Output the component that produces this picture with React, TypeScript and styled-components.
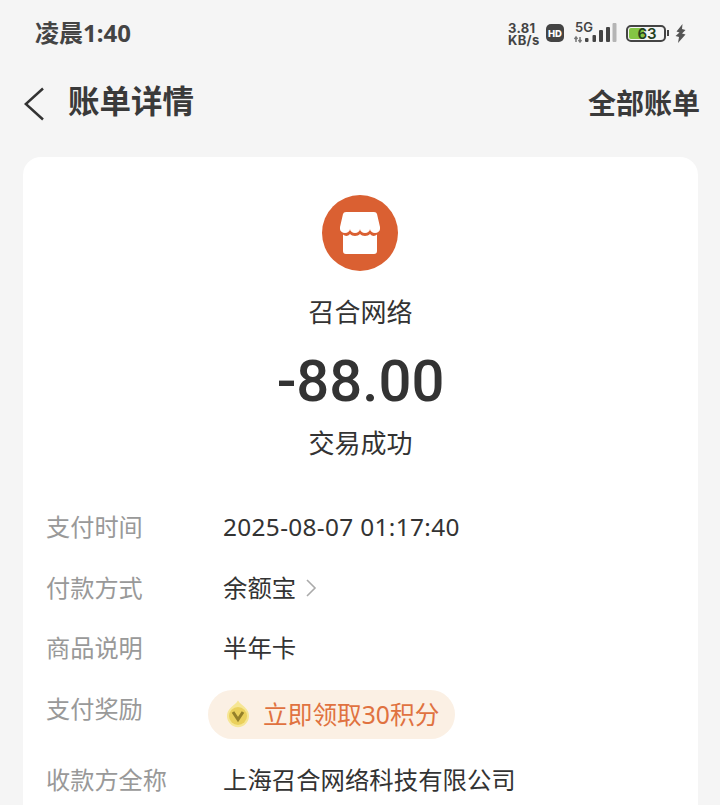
import styled, { createGlobalStyle } from "styled-components";

const CJK = `"Noto Sans", "Noto Sans CJK SC", sans-serif`;

const GlobalStyle = createGlobalStyle`
  html, body {
    margin: 0;
    padding: 0;
    height: 100%;
    overflow: hidden;
    background: #f5f5f5;
  }
`;

const rows = [
  { label: "支付时间", value: "2025-08-07 01:17:40", numeric: true },
  { label: "付款方式", value: "余额宝", arrow: true },
  { label: "商品说明", value: "半年卡" },
];

function App() {
  return (
    <SCPage>
      <GlobalStyle />
      <SCStatusBar>
        <SCTime>凌晨1:40</SCTime>
        <SCStatusIcons>
          <SCSpeed>{"3.81\nKB/s"}</SCSpeed>
          <SCHd>HD</SCHd>
          <SCNetwork>
            <SCFiveG>5G</SCFiveG>
            <svg width="43" height="20" viewBox="0 0 43 20">
              <path d="M2 19v-5M0.500 16l1.500-2 1.500 2M6 14v5M4.500 17l1.500 2 1.500-2" stroke="#777" strokeWidth="1.500" fill="none" />
              <rect x="11" y="15" width="3.500" height="4" rx="1" fill="#444" />
              <rect x="18.500" y="12" width="3.500" height="7" rx="1" fill="#444" />
              <rect x="25" y="7" width="4" height="12" rx="1" fill="#444" />
              <rect x="32" y="4" width="4" height="15" rx="1" fill="#444" />
              <rect x="38.500" y="0" width="4" height="19" rx="1" fill="#b5b5b5" />
            </svg>
          </SCNetwork>
          <SCBattery>
            <SCBatteryFill />
            <SCBatteryLevel>63</SCBatteryLevel>
          </SCBattery>
          <SCBatteryCap />
          <svg width="11" height="19" viewBox="0 0 11 19">
            <path d="M7.500 0 1.500 7.500 4.500 8.500 0.500 12 4 13 3 19 10.500 10.500 7 9.500 10.500 6 7 5Z" fill="#555" />
          </svg>
        </SCStatusIcons>
      </SCStatusBar>

      <SCHeader>
        <SCHeaderLeft>
          <SCBackIcon width="22" height="34" viewBox="0 0 22 34">
            <path d="M19 1.500 1.800 17 19 32.500" fill="none" stroke="#333" strokeWidth="2.500" />
          </SCBackIcon>
          <SCTitle>账单详情</SCTitle>
        </SCHeaderLeft>
        <SCAllBills>全部账单</SCAllBills>
      </SCHeader>

      <SCCard>
        <SCShopIcon>
          <svg width="40" height="42" viewBox="0 0 40 42">
            <path
              d="M6 0H34Q36.500 0 37 2L40 15V17A5 4 0 0 1 30 17A5 4 0 0 1 20 17A5 4 0 0 1 10 17A5 4 0 0 1 0 17V15L3 2Q3.500 0 6 0Z"
              fill="#fff"
            />
            <path
              d="M3 22.500C5 24.500 8 24.500 10 22C12 24.500 18 24.500 20 22C22 24.500 28 24.500 30 22C32 24.500 35 24.500 37 22.500V39A3 3 0 0 1 34 42H6A3 3 0 0 1 3 39Z"
              fill="#fff"
            />
          </svg>
        </SCShopIcon>
        <SCMerchant>召合网络</SCMerchant>
        <SCAmount>-88.00</SCAmount>
        <SCTradeStatus>交易成功</SCTradeStatus>

        <SCRows>
          {rows.map((row) => (
            <SCRow key={row.label}>
              <SCLabel>{row.label}</SCLabel>
              <SCValue $numeric={row.numeric}>
                {row.value}
                {row.arrow && (
                  <svg width="12" height="20" viewBox="0 0 12 20">
                    <path d="M2 2l8 8-8 8" fill="none" stroke="#aaa" strokeWidth="1.600" />
                  </svg>
                )}
              </SCValue>
            </SCRow>
          ))}
          <SCRow>
            <SCLabel>支付奖励</SCLabel>
            <SCRewardPill>
              <svg width="26" height="29" viewBox="0 0 26 29">
                <path
                  d="M13 0.500C15 4 18 5 21 8.500C25 13 25 19 21 23.500C16.500 28.500 9.500 28.500 5 23.500C1 19 1 13 5 8.500C8 5 11 4 13 0.500Z"
                  fill="#f6e694"
                />
                <circle cx="13" cy="16" r="9" fill="#ead05c" />
                <path d="M8 12 13 19.500 18 12" fill="none" stroke="#94802a" strokeWidth="3" />
              </svg>
              <SCRewardText>立即领取30积分</SCRewardText>
            </SCRewardPill>
          </SCRow>
          <SCRow>
            <SCLabel>收款方全称</SCLabel>
            <SCValue>上海召合网络科技有限公司</SCValue>
          </SCRow>
        </SCRows>
      </SCCard>
    </SCPage>
  );
}

const SCPage = styled.div`
  width: 720px;
  height: 805px;
  overflow: hidden;
  background: #f5f5f5;
  font-family: ${CJK};
  color: #333;
`;

const SCStatusBar = styled.div`
  height: 66px;
  padding: 0 34px 0 35px;
  box-sizing: border-box;
  display: flex;
  align-items: center;
  justify-content: space-between;
`;

const SCTime = styled.div`
  margin-bottom: 4px;
  font-size: 24px;
  font-weight: 700;
  color: #444;
`;

const SCStatusIcons = styled.div`
  display: flex;
  align-items: center;
`;

const SCSpeed = styled.div`
  width: 33px;
  margin: 1px 5px 0 0;
  white-space: pre-line;
  font-family: "Inter", sans-serif;
  font-size: 13px;
  font-weight: 700;
  line-height: 12px;
  letter-spacing: 0.3px;
  color: #444;
`;

const SCHd = styled.div`
  width: 18px;
  height: 18px;
  margin-right: 10px;
  border-radius: 5px;
  background: #444;
  color: #fff;
  font-family: "Inter", sans-serif;
  font-size: 9.500px;
  font-weight: 800;
  display: flex;
  align-items: center;
  justify-content: center;
`;

const SCNetwork = styled.div`
  position: relative;
  width: 43px;
  height: 20px;
  margin-right: 9px;
  display: flex;
  align-items: flex-end;
`;

const SCFiveG = styled.span`
  position: absolute;
  left: 1px;
  top: -3px;
  font-family: "Inter", sans-serif;
  font-size: 13px;
  line-height: 15px;
  font-weight: 600;
  color: #444;
`;

const SCBattery = styled.div`
  position: relative;
  width: 40px;
  height: 17px;
  box-sizing: border-box;
  border: 2px solid #444;
  border-radius: 5px;
  display: flex;
  align-items: center;
  justify-content: center;
  overflow: hidden;
`;

const SCBatteryFill = styled.div`
  position: absolute;
  left: 1px;
  top: 1px;
  bottom: 1px;
  width: 15px;
  border-radius: 2px;
  background: #84c544;
`;

const SCBatteryLevel = styled.span`
  position: relative;
  left: 1px;
  font-family: "Inter", sans-serif;
  font-size: 15px;
  line-height: 13px;
  font-weight: 600;
  color: #24401c;
`;

const SCBatteryCap = styled.div`
  width: 2px;
  height: 6px;
  margin: 0 6px 0 1px;
  background: #444;
`;

const SCHeader = styled.div`
  height: 72px;
  padding: 0 20px 0 24px;
  display: flex;
  align-items: center;
  justify-content: space-between;
`;

const SCHeaderLeft = styled.div`
  display: flex;
  align-items: center;
  gap: 22px;
`;

const SCBackIcon = styled.svg`
  margin-top: 4px;
`;

const SCTitle = styled.h1`
  margin: 0 0 6px;
  font-size: 31.500px;
  font-weight: 700;
  color: #3a3a3a;
`;

const SCAllBills = styled.div`
  font-size: 28px;
  font-weight: 700;
  color: #3a3a3a;
`;

const SCCard = styled.div`
  margin: 19px 22px 0 23px;
  height: 700px;
  padding-top: 38px;
  box-sizing: border-box;
  background: #fff;
  border-radius: 18px;
  display: flex;
  flex-direction: column;
  align-items: center;
`;

const SCShopIcon = styled.div`
  width: 76px;
  height: 76px;
  margin-right: 1px;
  border-radius: 50%;
  background: #da6032;
  display: flex;
  align-items: center;
  justify-content: center;
`;

const SCMerchant = styled.div`
  margin-top: 23px;
  font-size: 26px;
  line-height: 36px;
`;

const SCAmount = styled.div`
  margin-top: 16px;
  font-family: "Roboto", sans-serif;
  font-size: 58px;
  font-weight: 500;
  line-height: 70px;
  color: #333;
`;

const SCTradeStatus = styled.div`
  margin-top: 9px;
  font-size: 26px;
  line-height: 36px;
`;

const SCRows = styled.div`
  align-self: stretch;
  padding: 36px 23px 0;
  display: flex;
  flex-direction: column;
`;

const SCRow = styled.div`
  display: flex;
  align-items: flex-start;
`;

const SCLabel = styled.div`
  width: 177px;
  flex-shrink: 0;
  font-size: 24.200px;
  line-height: 60.500px;
  color: #999;
`;

const SCValue = styled.div<{ $numeric?: boolean }>`
  display: flex;
  align-items: center;
  gap: 9px;
  font-size: 24.400px;
  line-height: 60.500px;
  letter-spacing: ${(p) => (p.$numeric ? "0.33px" : "0")};
  color: #333;
`;

const SCRewardPill = styled.div`
  margin: 11.500px 0 11px -15px;
  width: 247px;
  height: 49px;
  box-sizing: border-box;
  padding-left: 17px;
  border-radius: 25px;
  background: #fbf0e4;
  display: flex;
  align-items: center;
  gap: 12px;
`;

const SCRewardText = styled.span`
  margin-bottom: 3px;
  font-size: 24.700px;
  color: #e07240;
`;

export default App;
